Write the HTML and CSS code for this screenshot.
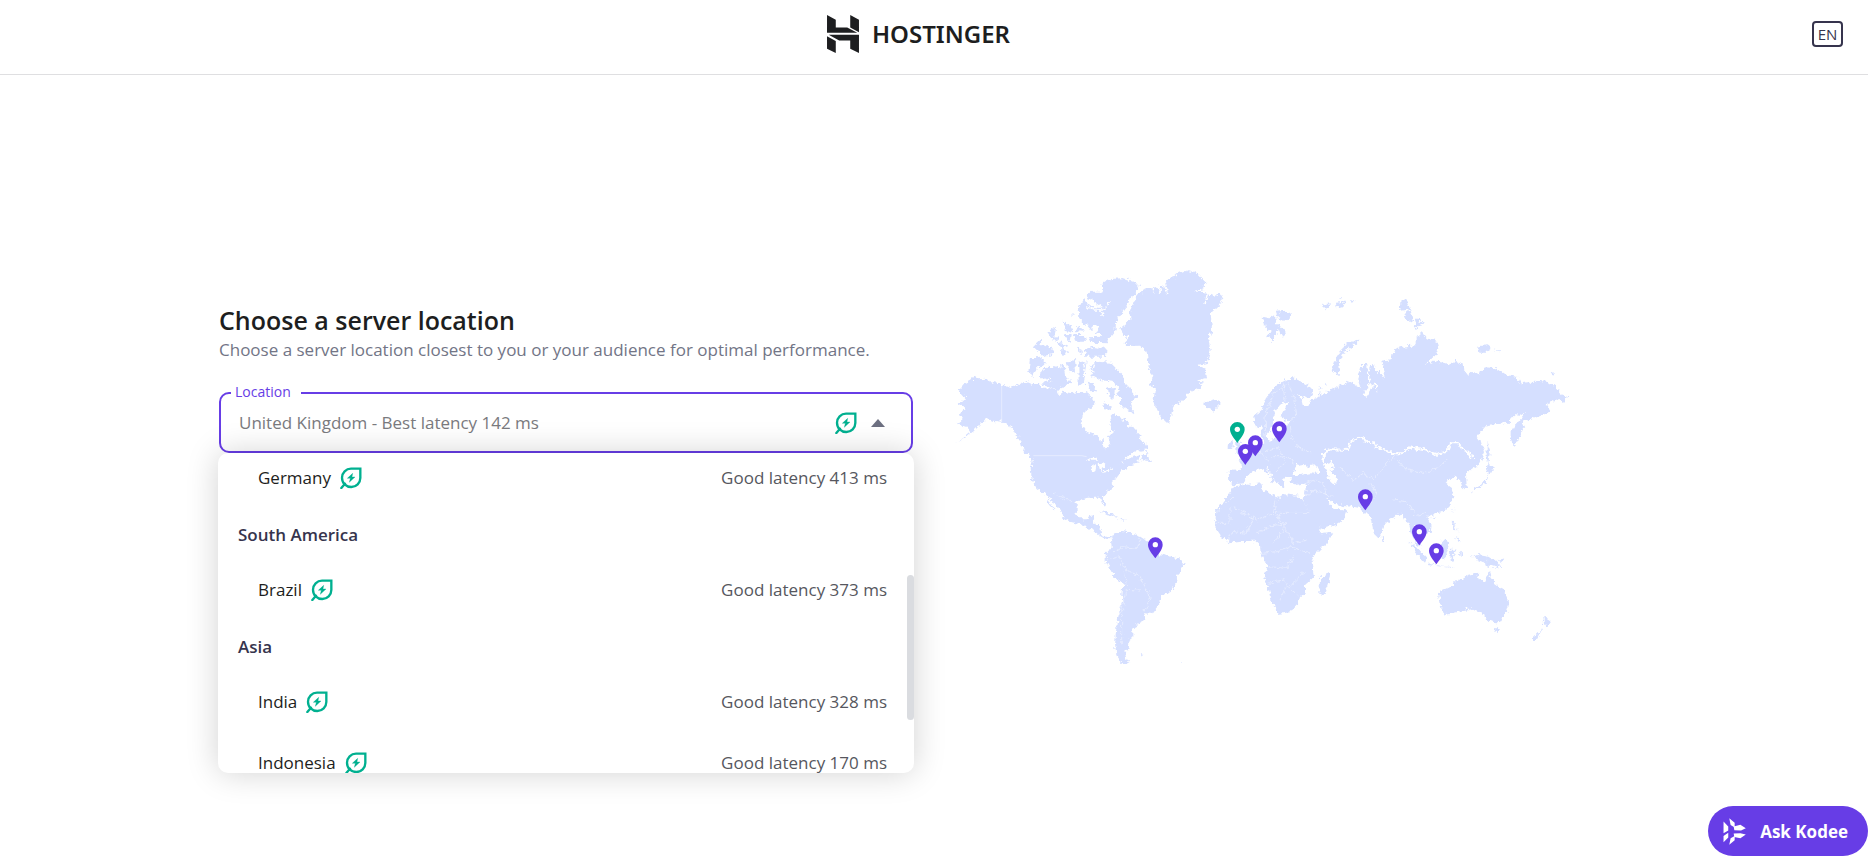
FILE: index.html
```html
<!DOCTYPE html>
<html lang="en">
<head>
  <meta charset="UTF-8" />
  <meta name="viewport" content="width=device-width, initial-scale=1.0" />
  <title>Choose a server location</title>
  <link rel="stylesheet" href="styles.css">
</head>
<body>
  <!-- shared icons -->
  <svg class="sprite" aria-hidden="true">
    <symbol id="leaf" viewBox="0 0 66 66">
      <path d="M61 5H33A27 27 0 0 0 6 32C6 48 18 60 34 60A27 27 0 0 0 61 33ZM15 50L4 63" fill="none" stroke="#00b090" stroke-width="7" stroke-linecap="round" />
      <path d="M38 19L22 34H31L28 46L45 30H36Z" fill="#00b090" stroke="#00b090" stroke-width="1" />
    </symbol>
    <symbol id="pin" viewBox="-23 -64 46 64" overflow="visible">
      <path d="M0 0C-9 -13 -22 -27 -22 -41A22 22 0 0 1 22 -41C22 -27 9 -13 0 0Z" />
      <circle cx="0" cy="-41" r="8" fill="#fff" />
    </symbol>
  </svg>

  <header class="header">
    <a class="logo" href="#">
      <svg class="logo-mark" viewBox="0 0 95 113" aria-hidden="true">
        <path d="M0 0L26 14V37H60L90 53H0ZM69 0L95 14V51L69 37ZM0 63L26 77V113L0 100ZM5 59H95V113L69 100V76H36Z" />
      </svg>
      <span>HOSTINGER</span>
    </a>
    <button class="lang" type="button">EN</button>
  </header>

  <main class="content">
    <section class="picker">
      <h1>Choose a server location</h1>
      <p class="subtitle">Choose a server location closest to you or your audience for optimal performance.</p>

      <div class="field">
        <label for="location">Location</label>
        <select id="location">
          <option>United Kingdom - Best latency 142 ms</option>
        </select>
        <div class="field-icons">
          <svg class="leaf" aria-hidden="true"><use href="#leaf" /></svg>
          <span class="arrow"></span>
        </div>

        <div class="dropdown">
          <ul class="options">
            <li class="option"><span>Germany</span><svg class="leaf" aria-hidden="true"><use href="#leaf" /></svg><span class="latency">Good latency 413 ms</span></li>
            <li class="group">South America</li>
            <li class="option"><span>Brazil</span><svg class="leaf" aria-hidden="true"><use href="#leaf" /></svg><span class="latency">Good latency 373 ms</span></li>
            <li class="group">Asia</li>
            <li class="option"><span>India</span><svg class="leaf" aria-hidden="true"><use href="#leaf" /></svg><span class="latency">Good latency 328 ms</span></li>
            <li class="option"><span>Indonesia</span><svg class="leaf" aria-hidden="true"><use href="#leaf" /></svg><span class="latency">Good latency 170 ms</span></li>
          </ul>
          <div class="scroll-thumb"></div>
        </div>
      </div>
    </section>

    <section class="map">
      <svg viewBox="-18 0 1938 1290" role="img" aria-label="Server locations">
        <defs>
          <filter id="coast" x="0" y="0" width="100%" height="100%">
            <feTurbulence type="fractalNoise" baseFrequency="0.08" numOctaves="3" seed="4" />
            <feDisplacementMap in="SourceGraphic" scale="20" xChannelSelector="R" yChannelSelector="G" />
          </filter>
        </defs>
        <g filter="url(#coast)">
          <g class="land">
            <!-- north america -->
            <path d="M105 378L118 388L135 386L160 396L185 402L212 414L228 402L240 405L255 393L275 402L295 402L320 420L335 415L352 422L358 435L370 425L395 430L415 425L440 430L455 440L465 455L458 470L445 478L430 490L423 520L440 545L465 555L488 568L490 588L500 598L508 585L503 568L518 550L512 525L508 505L520 492L540 500L550 515L560 505L565 530L580 530L595 550L600 565L620 585L622 598L595 603L565 615L545 638L575 622L600 615L595 632L610 633L575 645L545 660L530 680L518 698L520 712L495 730L488 740L498 760L495 770L484 755L480 743L450 743L425 748L410 760L410 790L420 808L440 808L448 795L465 793L458 815L470 822L482 828L482 850L492 860L512 860L508 868L495 866L480 858L462 842L440 832L420 822L390 815L370 803L365 785L345 765L330 745L322 738L335 765L347 782L330 768L312 728L290 715L275 690L272 650L275 630L255 605L245 590L240 570L225 550L215 530L190 516L160 512L140 508L125 520L105 540L80 560L45 582L72 562L92 545L82 532L60 525L50 518L68 512L60 490L80 478L50 458L80 448L56 422L75 400L90 392Z" />
            <path d="M488 100L510 88L550 84L582 95L597 112L580 140L565 150L558 172L545 190L528 212L527 240L510 262L500 280L455 278L445 262L485 260L470 245L478 232L468 222L450 240L430 215L418 205L416 175L430 148L452 170L490 175L440 140L455 125L490 125Z" />
            <path d="M448 292L475 296L500 288L498 320L432 320L432 298ZM415 310L415 290L425 300V320ZM270 325L300 320L315 335L290 360L280 378L265 365ZM300 368L320 350L345 352L370 340L375 375L395 395L370 410L350 420L320 408L305 398L335 392L300 380ZM380 338L405 330L408 362L388 368ZM415 335L440 330L432 400L416 412ZM280 290L310 262L300 285L335 290L340 312L310 318ZM322 245L345 230L342 255L358 270L340 275ZM368 212L395 228L400 245L375 240ZM352 270L380 285L370 300L395 310L370 314ZM400 255L432 255L435 275L405 275ZM408 228L425 232L432 245L412 244ZM396 188L402 196L398 198ZM375 255L395 255L390 280Z" />
            <path d="M450 345L470 335L512 338L528 355L552 380L555 402L578 425L592 442L572 455L580 490L552 475L535 455L545 445L525 435L540 420L520 395L480 390L455 375ZM440 395L460 400L470 425L450 420ZM500 410L525 418L520 450L505 440ZM490 455L520 480L495 478ZM605 628L620 605L625 622L638 632L615 632Z" />
            <path d="M480 783L505 787L532 800L505 796ZM535 805L560 810L548 812ZM510 810L520 811ZM106 800L110 802L107 805Z" />
            <!-- greenland, iceland -->
            <path d="M538 238L575 205L570 185L580 155L600 130L620 115L640 120L662 105L680 108L678 88L700 82L715 72L745 60L770 68L785 85L800 100L790 118L762 124L800 128L825 140L838 132L850 142L838 165L812 190L816 240L805 270L812 300L800 340L775 345L795 360L798 385L768 392L790 402L775 418L745 428L725 455L700 470L688 518L665 508L650 475L640 455L645 420L628 400L640 380L625 345L620 305L600 287L560 288L550 280L568 262L550 258Z" />
            <path d="M790 455L808 455L825 450L842 460L820 482L803 475Z" />
            <!-- south america -->
            <path d="M515 853L545 843L590 852L605 862L625 875L640 900L655 912L685 918L715 925L733 942L712 975L708 1000L695 1023L665 1035L660 1060L635 1092L612 1090L617 1108L590 1122L590 1132L577 1135L577 1160L565 1170L570 1190L555 1210L560 1230L572 1240L545 1240L530 1215L525 1185L530 1120L545 1060L550 1000L523 980L497 935L497 912L515 890L512 862ZM602 1211L612 1214L606 1217ZM720 1232L727 1237L722 1238Z" />
            <!-- europe and asia -->
            <path d="M940 500L965 480L975 450L1000 415L1030 392L1060 385L1090 400L1115 415L1120 435L1095 445L1073 432L1085 452L1088 465L1105 465L1115 447L1135 445L1138 425L1142 438L1160 425L1190 410L1220 400L1222 392L1240 400L1265 415L1255 385L1265 345L1282 345L1285 410L1265 437L1280 440L1300 408L1312 425L1310 405L1288 402V350L1302 345L1315 375L1318 360L1335 388L1325 335L1355 330L1358 305L1380 292L1430 285L1430 262L1445 247L1460 265L1490 275L1495 295L1485 318L1450 346L1480 332L1510 338L1535 345L1545 332L1568 340L1570 358L1585 378L1590 366L1620 368L1635 352L1670 355L1700 375L1730 380L1740 400L1770 395L1780 402L1790 392L1820 395L1850 415L1865 435L1885 442L1870 462L1855 447L1840 452L1820 465L1832 485L1795 500L1765 510L1745 515L1750 530L1740 560L1722 592L1712 570L1712 545L1735 515L1755 488L1740 497L1720 495L1705 518L1640 525L1610 560L1622 575L1632 610L1615 645L1595 658L1578 670L1580 712L1568 715L1562 695L1545 682L1522 690L1520 700L1535 710L1540 745L1530 765L1510 785L1480 792L1462 800L1475 825L1472 848L1455 852L1440 830L1422 825L1428 850L1445 892L1432 885L1412 850L1405 820L1400 818L1388 790L1370 795L1345 815L1330 825L1325 850L1312 863L1300 840L1290 795L1275 790L1262 775L1240 770L1210 768L1185 762L1165 745L1162 755L1185 778L1195 778L1222 785L1215 805L1190 825L1140 840L1125 820L1105 780L1090 750L1095 735L1098 700L1070 705L1052 698L1052 682L1036 680L1025 690L1030 710L1018 708L1008 690L990 670L980 655L975 650L990 678L1008 690L1000 700L990 680L970 660L955 655L935 665L920 680L912 700L885 703L868 698L866 658L905 660L905 640L890 632L915 620L940 605L955 590L970 580L965 560L965 525L945 535Z" />
            <path d="M865 575L878 568L878 592L862 597ZM888 560L905 590L912 612L890 615Z" />
            <!-- arctic islands -->
            <path d="M968 200L990 205L1005 195L1008 220L1020 228L1038 250L1025 260L1015 235L997 275L985 260L992 245L975 232ZM1008 185L1035 182L1052 190L1050 200L1030 213L1015 205ZM1262 267L1240 288L1215 302L1195 345L1200 378L1175 362L1190 320L1215 282L1245 272ZM1385 152L1400 148L1412 178L1380 182ZM1390 188L1412 182L1422 215L1400 210ZM1430 205L1450 220L1423 238ZM1615 290L1640 283L1655 295L1635 308L1618 308ZM1665 298L1683 303L1675 307ZM1635 330L1647 334ZM1830 372L1848 370L1838 377ZM1142 165L1170 160L1160 180ZM1188 158L1215 155L1210 172L1190 175ZM1200 140L1208 138L1205 148ZM1230 150L1244 155L1235 162ZM1315 157L1322 158ZM1140 405L1145 415L1135 420ZM1155 402L1165 405L1158 408Z" />
            <!-- africa -->
            <path d="M885 708L965 700L968 720L1000 735L1015 740L1035 733L1080 738L1095 760L1120 805L1135 830L1140 850L1177 845L1165 875L1125 915L1115 935L1122 980L1095 1005L1095 1030L1080 1040L1075 1062L1050 1087L1012 1092L995 1050L985 1010L973 985L982 950L962 910L960 885L945 872L925 872L870 880L845 860L825 830L828 785L850 755L865 735ZM1140 985L1165 968L1170 980L1153 1035L1138 1032Z" />
            <!-- south east asia, japan -->
            <path d="M1408 878L1430 890L1460 925L1455 935L1430 910ZM1462 940L1510 950L1530 950L1545 955L1465 945ZM1490 895L1515 868L1528 880L1515 925L1495 925ZM1530 900L1550 898L1538 910L1545 930L1532 932ZM1535 810L1545 825L1552 845L1538 832ZM1548 860L1562 872L1558 880ZM1645 643L1662 660L1645 670L1640 700L1595 725L1590 732L1600 718L1635 695L1645 670L1637 652ZM1640 575L1650 600L1645 640L1640 625ZM1538 778L1540 775L1537 790ZM1325 858L1334 870L1327 873ZM1473 803L1485 800L1478 808ZM1560 905L1568 912L1562 920ZM1645 650L1655 645L1665 655L1650 662Z" />
            <!-- australia, new zealand -->
            <path d="M1500 1025L1530 1012L1550 990L1570 985L1585 975L1615 968L1612 982L1635 995L1648 962L1662 1000L1690 1020L1705 1055L1700 1080L1685 1112L1670 1117L1655 1115L1637 1108L1632 1090L1620 1085L1612 1085L1590 1075L1550 1087L1515 1095L1505 1080L1498 1040ZM1660 1135L1678 1135L1670 1150ZM1810 1100L1833 1115L1820 1135L1812 1122ZM1808 1135L1790 1170L1773 1170L1790 1152ZM1595 920L1615 915L1645 920L1670 935L1685 955L1655 945L1640 950L1630 935L1605 925ZM1675 930L1695 925L1685 935ZM1760 1012L1772 1018ZM1828 995L1834 998Z" />
          </g>
          <!-- seas and lakes -->
          <g class="water">
            <path d="M1030 455L1044 460L1030 485L1022 505L1050 518L1032 532L1025 560L985 572L980 552L1003 520L1000 495L1015 470Z" />
            <path d="M1060 672L1070 645L1090 642L1102 652L1120 640L1140 660L1140 672L1110 670L1065 678Z" />
            <path d="M1152 645L1178 635L1185 645L1172 655L1192 688L1185 703L1168 695L1160 670Z" />
            <path d="M440 632L460 620L475 632ZM460 640L470 645L465 668L458 665ZM475 638L495 645L482 665ZM482 670L512 655L505 665ZM500 658L518 650L510 658Z" />
          </g>
          <path class="fjords" d="M440 170L465 180L490 180L512 155M480 180L494 200M635 105L642 128M655 108L662 125M672 105L684 130M795 165L802 130M380 310H440M385 360L400 380L412 410M440 320L432 350L440 385M465 340L455 370M345 340L365 355" />
          <path class="border-strong" d="M1150 640L1152 605L1175 598L1225 600L1230 575L1270 562L1278 575L1305 577L1310 592L1360 610L1385 610L1410 592L1450 600L1490 612L1520 605L1530 580L1555 580L1565 595L1585 605L1590 622L1605 620" />
          <path class="borders" d="M342 730L370 745L400 755M978 560L975 500L1000 430L1040 405M1030 400L1035 455M1045 400L1065 450L1070 500L1050 515L1055 560L1080 595L1115 608M955 600L975 625L990 640M975 605L1010 590L1040 640M1000 620H1045L1060 640M1010 665L1030 640M1195 650L1240 690L1270 670L1300 690L1340 640L1370 615M1370 630L1400 660L1450 670L1500 650L1520 625M1255 745L1290 760L1310 730L1290 700M1360 750L1400 755L1430 800L1460 790M1100 700L1130 690L1150 700L1160 740M1095 740L1120 720L1180 740M880 770L950 810L1000 790L1010 745M1010 790H1110M828 790L850 770L880 740M830 820H870V770M860 870L880 845L920 850L940 800M950 850L990 830L1030 820L1060 880L1100 870M1000 880L1030 840L1010 790M965 910L1010 905L1050 890L1110 910M985 950L1040 955L1060 920M985 1000L1030 990L1050 1010L1090 970M1020 1050L1040 1010L1075 1035M520 910L550 890L590 895L600 870M500 930L540 920L555 960L600 980L615 1010L630 1040L615 1085M553 965L560 1010L545 1080L545 1180M560 1018L600 1020M1640 918V950" />
        </g>
        <path class="borders" d="M185 402V516M280 617H425L440 620" />
        <g class="pins">
          <use href="#pin" x="995" y="513" width="46" height="64" />
          <use href="#pin" x="923" y="555" width="46" height="64" />
          <use href="#pin" x="893" y="581" width="46" height="64" />
          <use href="#pin" x="623" y="861" width="46" height="64" />
          <use href="#pin" x="1253" y="717" width="46" height="64" />
          <use href="#pin" x="1415" y="822" width="46" height="64" />
          <use href="#pin" x="1466" y="879" width="46" height="64" />
          <use class="pin-active" href="#pin" x="869" y="515" width="46" height="64" />
        </g>
      </svg>
    </section>
  </main>

  <button class="kodee" type="button">
    <svg viewBox="0 0 68 80" aria-hidden="true">
      <path d="M17 1L33 14V28L21 21ZM0 10L14 25V37L0 45ZM30 25L50 20L66 30L52 37L32 36ZM30 46L50 45L66 49L50 60L32 56ZM0 72L0 53L14 44V58ZM17 79L21 60L33 53V66Z" />
    </svg>
    Ask Kodee
  </button>
</body>
</html>
```
FILE: styles.css
```css
* {
  box-sizing: border-box;
}
body {
  margin: 0;
  min-height: 100vh;
  background-color: #fff;
  color: #1d1e20;
  font-family: "Open Sans", sans-serif;
  font-size: 17px;
}
button {
  font-family: inherit;
  cursor: pointer;
}
.sprite {
  display: none;
}

.header {
  display: flex;
  align-items: center;
  justify-content: space-between;
  height: 75px;
  padding: 0 25px 7px;
  border-bottom: 1px solid #dfdfe1;
}
.header::before {
  content: "";
}
.logo {
  display: flex;
  align-items: center;
  gap: 13px;
  color: #1d1e20;
  font-family: "Noto Sans", sans-serif;
  font-size: 24px;
  font-weight: 600;
  line-height: 36px;
  text-decoration: none;
}
.logo-mark {
  width: 32px;
  height: 38px;
  fill: #1d1e20;
}
.lang {
  width: 31px;
  height: 26px;
  padding: 0;
  border: 2px solid #36344d;
  border-radius: 4px;
  background: none;
  color: #36344d;
  font-size: 15px;
  font-weight: 500;
  line-height: 20px;
}

.content {
  display: grid;
  grid-template-columns: 1fr 1fr;
  align-items: start;
  max-width: 1430px;
  margin: 0 auto;
  padding-top: 175px;
}
.picker {
  padding: 54px 21px 0 0;
}
h1 {
  margin: 0;
  font-size: 25px;
  font-weight: 600;
  line-height: 32px;
}
.subtitle {
  margin: 0;
  color: #727586;
  line-height: 28px;
}

.field {
  position: relative;
  margin-top: 28px;
}
.field label {
  position: absolute;
  top: -10px;
  left: 12px;
  padding: 0 10px 0 4px;
  background-color: #fff;
  color: #673de6;
  font-size: 14px;
  line-height: 20px;
}
.field select {
  display: block;
  width: 100%;
  height: 61px;
  padding: 0 90px 0 18px;
  border: 2px solid #673de6;
  border-radius: 10px;
  background: none;
  color: #7a7a7e;
  font-family: inherit;
  font-size: 17px;
  appearance: none;
}
.field-icons {
  position: absolute;
  top: 0;
  right: 28px;
  display: flex;
  align-items: center;
  gap: 14px;
  height: 61px;
  pointer-events: none;
}
.leaf {
  width: 22px;
  height: 22px;
}
.arrow {
  border: 7px solid transparent;
  border-top: 0;
  border-bottom: 8px solid #6d7081;
}

.dropdown {
  position: absolute;
  top: 61px;
  left: -1px;
  right: -1px;
  height: 320px;
  overflow: hidden;
  border-radius: 10px;
  background-color: #fff;
}
.field::after {
  content: "";
  position: absolute;
  top: 61px;
  left: -1px;
  right: -1px;
  height: 320px;
  border-radius: 10px;
  box-shadow: 0 0 32px rgba(0, 0, 0, 0.18);
  pointer-events: none;
}
.options {
  margin: -5px 0 0;
  padding: 0;
  list-style: none;
}
.option {
  display: flex;
  align-items: center;
  gap: 9px;
  height: 61px;
  padding: 0 27px 2px 40px;
}
.latency {
  margin-left: auto;
  color: #56575e;
}
.group {
  height: 51px;
  padding-left: 20px;
  color: #36344d;
  font-weight: 600;
  line-height: 51px;
}
.scroll-thumb {
  position: absolute;
  top: 122px;
  right: 0;
  width: 7px;
  height: 145px;
  border-radius: 4px;
  background-color: #dadce0;
}

.map svg {
  display: block;
  width: 100%;
  max-width: 646px;
}
.land {
  fill: #d5dfff;
}
.water {
  fill: #fff;
}
.fjords,
.borders,
.border-strong {
  fill: none;
  stroke: #fff;
  stroke-width: 4;
}
.borders {
  stroke-width: 2;
  opacity: 0.6;
}
.border-strong {
  stroke-width: 6;
}
.pins {
  fill: #673de6;
}
.pin-active {
  fill: #00b090;
}

.kodee {
  position: fixed;
  right: 0;
  bottom: 3px;
  display: flex;
  align-items: center;
  gap: 13px;
  height: 50px;
  padding: 0 20px 0 15px;
  border: 0;
  border-radius: 25px;
  background-color: #673de6;
  color: #fff;
  font-size: 17px;
  font-weight: 700;
}
.kodee svg {
  width: 24px;
  height: 27px;
  fill: #fff;
}
```
